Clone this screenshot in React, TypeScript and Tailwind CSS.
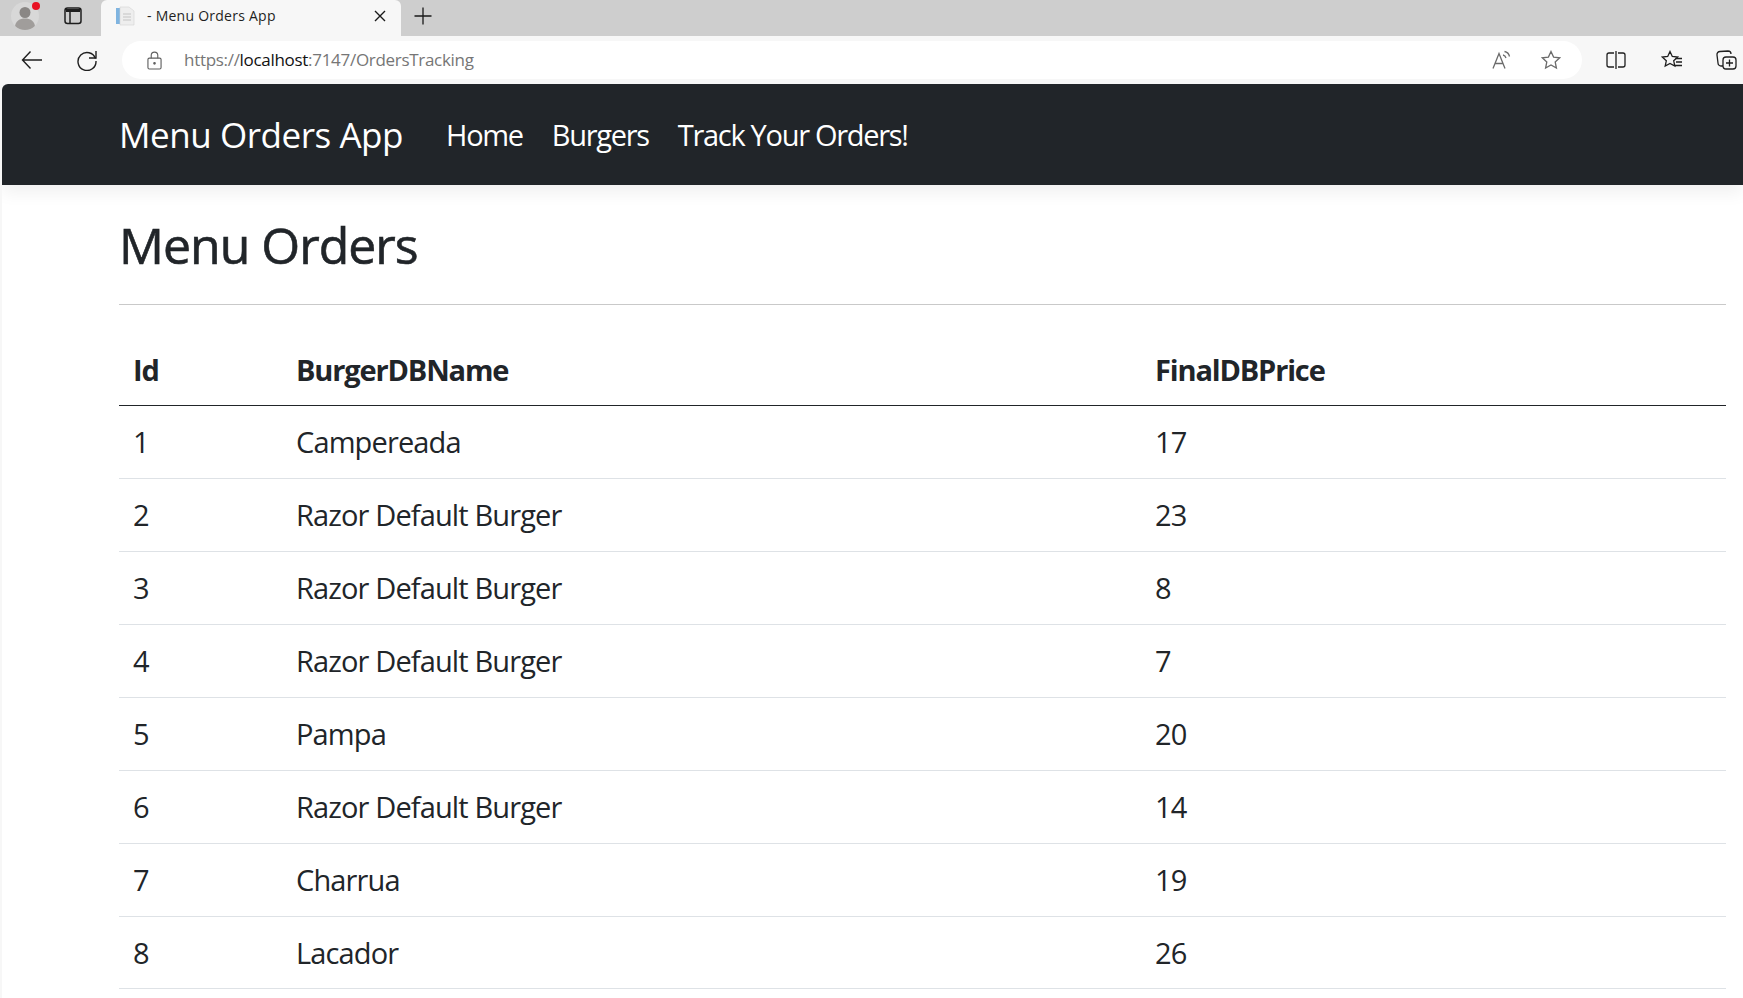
const rows: [number, string, number][] = [
  [1, "Campereada", 17],
  [2, "Razor Default Burger", 23],
  [3, "Razor Default Burger", 8],
  [4, "Razor Default Burger", 7],
  [5, "Pampa", 20],
  [6, "Razor Default Burger", 14],
  [7, "Charrua", 19],
  [8, "Lacador", 26],
];

function TabStrip() {
  return (
    <div className="flex h-[36px] items-stretch bg-[#cecece]">
      <div className="flex w-[101px] shrink-0 items-center pb-[4px]">
        <div className="ml-[11px] h-[28px] w-[28px] shrink-0 overflow-hidden rounded-full bg-[#d8d8d8]">
          <svg viewBox="0 0 28 28" className="h-[28px] w-[28px]">
            <circle cx="14" cy="10.5" r="5.5" fill="#8a8785" />
            <path d="M4 25c0-6 5-8.500 10-8.500S24 19 24 25v3H4z" fill="#a09d9b" />
          </svg>
        </div>
        <div className="-ml-[7px] -mt-[20px] h-[8px] w-[8px] shrink-0 rounded-full bg-[#e81123]" />
        <svg viewBox="0 0 20 20" className="ml-[23px] h-[20px] w-[20px] shrink-0" fill="none">
          <rect x="2" y="2" width="16" height="15.500" rx="2.500" stroke="#1f1f1f" strokeWidth="1.500" />
          <path d="M3 3h14v3H3z" fill="#1f1f1f" />
          <path d="M7 6v11" stroke="#1f1f1f" strokeWidth="1.500" />
        </svg>
      </div>
      <div className="flex w-[300px] shrink-0 items-center rounded-t-[6px] bg-[#f7f7f7] pb-[4px]">
        <svg viewBox="0 0 20 20" className="ml-[14px] h-[20px] w-[20px] shrink-0">
          <path d="M1 2h4v16H1z" fill="#7fb4e0" />
          <path d="M5 1h9l5 4v14H5z" fill="#eeeeee" stroke="#d4d4d4" strokeWidth="0.600" />
          <path d="M8 8h8M8 11h8M8 14h8" stroke="#c4c4c4" strokeWidth="1.200" />
        </svg>
        <span className="ml-[12px] flex-1 pb-[2px] text-[14px] tracking-[0.25px] text-[#1f1f1f]">- Menu Orders App</span>
        <svg viewBox="0 0 12 12" className="mr-[15px] h-[12px] w-[12px]" fill="none" stroke="#1a1a1a" strokeWidth="1.400">
          <path d="M1 1l10 10M11 1L1 11" />
        </svg>
      </div>
      <div className="flex w-[44px] items-center justify-center pb-[4px]">
        <svg viewBox="0 0 18 18" className="h-[18px] w-[18px]" fill="none" stroke="#1a1a1a" strokeWidth="1.300">
          <path d="M9 0.500v17M0.500 9h17" />
        </svg>
      </div>
    </div>
  );
}

function AddressBar() {
  return (
    <div className="flex h-[48px] items-center overflow-hidden bg-[#f7f7f7]">
      <svg viewBox="0 0 22 22" className="ml-[21px] h-[22px] w-[22px] shrink-0" fill="none" stroke="#1f1f1f" strokeWidth="1.400">
        <path d="M21 11H1.500M9.500 2.500L1.500 11l8 8.500" />
      </svg>
      <svg viewBox="0 0 22 22" className="ml-[33px] h-[22px] w-[22px] shrink-0" fill="none" stroke="#1f1f1f" strokeWidth="1.400">
        <path d="M19.500 9.500A9 9 0 1 0 20 12" />
        <path d="M20 2v7h-7" />
      </svg>
      <div className="ml-[24px] flex h-[38px] w-[1460px] shrink-0 items-center rounded-full bg-white">
        <svg viewBox="0 0 16 20" className="ml-[25px] h-[19px] w-[15px] shrink-0" fill="none" stroke="#5f5f5f" strokeWidth="1.200">
          <rect x="1" y="7.500" width="14" height="11.500" rx="1.500" />
          <path d="M4.500 7.500V4.500a3.500 3.500 0 0 1 7 0v3" />
          <circle cx="8" cy="13" r="0.800" fill="#5f5f5f" />
        </svg>
        <span className="ml-[22px] flex-1 text-[17px] tracking-[-0.3px] text-[#767676]">
          https://<span className="text-[#111111]">localhost</span>:7147/OrdersTracking
        </span>
        <svg viewBox="0 0 20 20" className="mr-[29px] h-[20px] w-[20px] shrink-0" fill="none" stroke="#6b6b6b" strokeWidth="1.300">
          <path d="M1 18.500L7 3.500l6 15M3 13.500h8" />
          <path d="M11 5c1.500.3 2.500 1.300 3 3M12.500 1.500c2.500.5 4.500 2.500 5 5" />
        </svg>
        <svg viewBox="0 0 20 20" className="mr-[21px] h-[20px] w-[20px] shrink-0" fill="none" stroke="#6b6b6b" strokeWidth="1.300">
          <path d="M10 1.500l2.600 5.600 6.100.7-4.500 4.200 1.200 6-5.400-3-5.400 3 1.200-6L1.300 7.800l6.100-.7z" />
        </svg>
      </div>
      <svg viewBox="0 0 20 20" className="ml-[24px] h-[20px] w-[20px] shrink-0" fill="none" stroke="#1f1f1f" strokeWidth="1.300">
        <path d="M8 3H3a2 2 0 0 0-2 2v10a2 2 0 0 0 2 2h5M12 3h5a2 2 0 0 1 2 2v10a2 2 0 0 1-2 2h-5M10 1v18" />
      </svg>
      <svg viewBox="0 0 22 20" className="ml-[35px] h-[20px] w-[22px] shrink-0" fill="none" stroke="#1f1f1f" strokeWidth="1.300">
        <path d="M9 1.500l2.300 5 5.400.6-4 3.700 1.100 5.300L9 13.400l-4.800 2.700 1.100-5.300-4-3.700 5.400-.6z" />
        <path d="M14.500 8.500H21M15 12h6M14 15.500h7" />
      </svg>
      <svg viewBox="0 0 22 22" className="ml-[33px] h-[22px] w-[22px] shrink-0" fill="none" stroke="#1f1f1f" strokeWidth="1.300">
        <path d="M7 17H5a3 3 0 0 1-3-3l-1-8a3 3 0 0 1 3-3.500L12 2a3 3 0 0 1 3 3" />
        <rect x="7" y="8" width="13" height="12" rx="3" />
        <path d="M13.500 10.500v7M10 14h7" />
      </svg>
    </div>
  );
}

export default function App() {
  return (
    <div
      className="h-[998px] w-[1743px] overflow-hidden bg-[#f7f7f7] text-[#212529]"
      style={{ fontFamily: '"Open Sans", "Noto Sans", sans-serif' }}
    >
      <TabStrip />
      <AddressBar />
      <div className="ml-[2px] h-[914px] overflow-hidden rounded-tl-[6px] bg-white">
        <nav className="flex h-[101px] items-center bg-[#212529] pl-[117px] text-white shadow-[0_8px_16px_rgba(0,0,0,0.06)]">
          <span className="pt-[2px] text-[35px] tracking-[-0.45px]">Menu Orders App</span>
          <span className="ml-[43px] text-[29px] tracking-[-1.3px]">Home</span>
          <span className="ml-[29px] text-[29px] tracking-[-1.3px]">Burgers</span>
          <span className="ml-[29px] text-[29px] tracking-[-1.3px]">Track Your Orders!</span>
        </nav>
        <main className="ml-[117px] w-[1607px]">
          <h1 className="flex h-[119px] items-center pt-[1px] text-[50px] font-normal tracking-[-1px] [-webkit-text-stroke:0.6px_#212529]">Menu Orders</h1>
          <div className="h-[1px] bg-[#c9c9c9]" />
          <table className="mt-[27px] w-full table-fixed border-collapse text-[29px] tracking-[-0.87px]">
            <colgroup>
              <col className="w-[163px]" />
              <col className="w-[859px]" />
              <col />
            </colgroup>
            <thead>
              <tr className="h-[73px] border-b border-[#212529] text-left">
                <th className="px-[14px] pt-[2px] font-bold tracking-[-1.15px]">Id</th>
                <th className="px-[14px] pt-[2px] font-bold tracking-[-1.15px]">BurgerDBName</th>
                <th className="px-[14px] pt-[2px] font-bold tracking-[-1.15px]">FinalDBPrice</th>
              </tr>
            </thead>
            <tbody>
              {rows.map(([id, name, price]) => (
                <tr key={id} className="h-[73px] border-b border-[#dee2e6] last:h-[72px]">
                  <td className="px-[14px] pt-[1px]">{id}</td>
                  <td className="px-[14px] pt-[1px]">{name}</td>
                  <td className="px-[14px] pt-[1px]">{price}</td>
                </tr>
              ))}
            </tbody>
          </table>
        </main>
      </div>
    </div>
  );
}
